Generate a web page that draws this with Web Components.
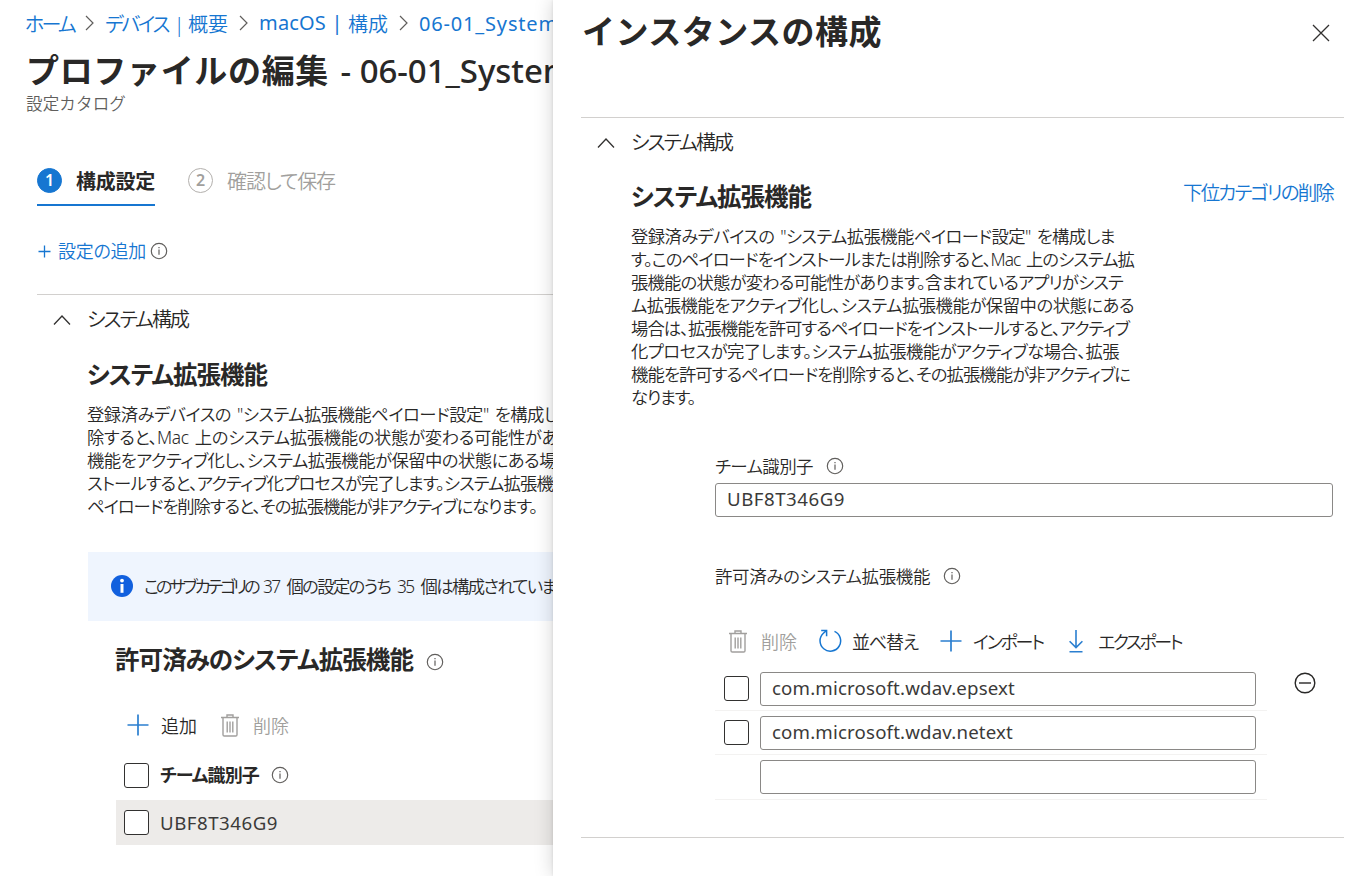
<!DOCTYPE html>
<html lang="ja">
<head>
<meta charset="utf-8">
<title>プロファイルの編集</title>
<style>
  body {
    margin: 0;
    background: #fff;
    color: #292827;
    font-family: "Noto Sans", "Noto Sans CJK JP", sans-serif;
    font-size: 17.33px;
    font-weight: 350;
    font-feature-settings: "palt";
  }
</style>
</head>
<body>
<portal-shell></portal-shell>

<script>
const define = (name, html, setup) => {
  const template = document.createElement('template');
  template.innerHTML = html;
  customElements.define(name, class extends HTMLElement {
    constructor() {
      super();
      this.attachShadow({ mode: 'open' });
      this.shadowRoot.appendChild(template.content.cloneNode(true));
    }
    connectedCallback() {
      if (setup) setup(this, this.shadowRoot);
    }
  });
};

const ICONS = {
  plus: [22, 22, '<path d="M11 .5v21M.5 11h21" stroke="#2b7fd0" stroke-width="1.7"/>'],
  smallplus: [13, 13, '<path d="M6.5 .5v12M.5 6.5h12" stroke="#1676d1" stroke-width="1.3"/>'],
  trash: [18, 23, '<path d="M0 3.5h18M6 3.5V1h6v2.5M2 3.5v17.2q0 1.3 1.3 1.3h11.4q1.3 0 1.3-1.3V3.5M6.2 7.5v11M9 7.5v11M11.8 7.5v11" stroke="#a19f9d" stroke-width="1.4"/>'],
  refresh: [24, 24, '<path d="M16.5 2.4A10.3 10.3 0 1 1 5.4 4.2L8.3 1.6" stroke="#1676d1" stroke-width="1.5"/><path d="M3.2 1.6h5.4v5.6" stroke="#1676d1" stroke-width="1.5"/>'],
  download: [14, 23, '<path d="M7 0v17.5M.6 11.2L7 17.6l6.4-6.4M.5 21.7h13" stroke="#2b7fd0" stroke-width="1.6"/>'],
  close: [18, 18, '<path d="M1 1l16 16M17 1L1 17" stroke="#323130" stroke-width="1.3"/>'],
  up: [18, 12, '<path d="M1 10.5l8-8.5 8 8.5" stroke="#323130" stroke-width="1.3"/>'],
  right: [9, 16, '<path d="M1 1l7 7-7 7" stroke="#605e5c" stroke-width="1.2"/>'],
  info: [18, 18, '<circle cx="9" cy="9" r="7.7" stroke="#605e5c" stroke-width="1.15"/><path d="M9 7.6v5.2M9 5v1.3" stroke="#605e5c" stroke-width="1.2"/>'],
  infofill: [22, 22, '<circle cx="11" cy="11" r="11" fill="#1160de"/><path d="M11 9v8.8" stroke="#fff" stroke-width="3"/><circle cx="11" cy="5.6" r="1.9" fill="#fff"/>'],
  minus: [22, 22, '<circle cx="11" cy="11" r="9.8" stroke="#292827" stroke-width="1.4"/><path d="M5 11h12" stroke="#292827" stroke-width="1.4"/>']
};

define('ui-icon', `
  <style>
    :host { display: inline-flex; flex: none; }
    svg { display: block; }
  </style>
`, (el, root) => {
  const [w, h, body] = ICONS[el.getAttribute('name')];
  root.innerHTML += `<svg width="${w}" height="${h}" viewBox="0 0 ${w} ${h}" fill="none">${body}</svg>`;
});

define('ui-checkbox', `
  <style>
    :host {
      display: block;
      flex: none;
      box-sizing: border-box;
      width: 25px;
      height: 25px;
      border: 1.5px solid #323130;
      border-radius: 3px;
      background: #fff;
    }
  </style>
`);

define('ui-field', `
  <style>
    :host {
      display: flex;
      align-items: center;
      box-sizing: border-box;
      height: 34px;
      padding: 0 11px 3px;
      border: 1px solid #8a8886;
      border-radius: 3px;
      background: #fff;
      color: #3b3a39;
      font-size: 18.67px;
      font-weight: 400;
    }
  </style>
  <slot></slot>
`);

define('ui-command', `
  <style>
    :host { display: flex; align-items: center; height: 30px; gap: 12px; font-size: 18px; }
    :host([disabled]) { color: #a19f9d; }
    span { display: flex; }
  </style>
  <slot name="icon"></slot>
  <span><slot></slot></span>
`);

define('bread-crumb', `
  <style>
    :host { display: flex; align-items: center; height: 28px; gap: 11px; color: #1676d1; font-size: 20px; }
  </style>
  <slot></slot>
`);

define('wizard-step', `
  <style>
    :host {
      display: flex;
      align-items: center;
      box-sizing: border-box;
      height: 49px;
      color: #a19f9d;
      border-bottom: 2px solid transparent;
      font-size: 20px;
    }
    :host([active]) { color: #292827; font-weight: 600; border-color: #1676d1; }
    i {
      box-sizing: border-box;
      width: 25px;
      height: 25px;
      margin-right: 14px;
      border: 1.4px solid #b3b0ad;
      border-radius: 50%;
      font: 600 16px/22px "Noto Sans", sans-serif;
      text-align: center;
    }
    :host([active]) i { background: #1676d1; border-color: #1676d1; color: #fff; }
  </style>
  <i></i><slot></slot>
`, (el, root) => {
  root.querySelector('i').textContent = el.getAttribute('number');
});

define('section-head', `
  <style>
    :host { display: flex; align-items: center; height: 47px; border-top: 1px solid #d2d0ce; font-size: 20px; }
    ui-icon { margin: 3px 16px 0; }
  </style>
  <ui-icon name="up"></ui-icon><slot></slot>
`);

define('text-lines', `
  <style>
    :host { display: flex; flex-direction: column; align-items: flex-start; line-height: 23px; word-spacing: 2px; }
  </style>
  <slot></slot>
`);

define('message-bar', `
  <style>
    :host {
      display: flex;
      align-items: center;
      box-sizing: border-box;
      height: 69px;
      padding: 0 0 2px 23px;
      background: #eff5fe;
      word-spacing: 4px;
    }
    ui-icon { margin-right: 11px; }
  </style>
  <ui-icon name="infofill"></ui-icon><slot></slot>
`);

define('edit-page', `
  <style>
    :host { display: flow-root; width: 553px; height: 876px; overflow: hidden; white-space: nowrap; }
    bread-crumb { margin: 9px 0 0 25px; }
    .latin { font-weight: 400; }
    h1 { display: flex; margin: 11px 0 0 26px; font-size: 33px; line-height: 46px; font-weight: 600; font-feature-settings: normal; }
    h1 .latin { font-weight: 500; }
    .sub { margin-left: 26px; font-size: 16.5px; line-height: 20px; color: #605e5c; font-feature-settings: normal; }
    .steps { display: flex; gap: 33px; margin: 43px 0 0 37px; }
    .add { display: flex; align-items: center; height: 30px; margin: 30px 0 0 38px; font-size: 18px; color: #1676d1; }
    .add ui-icon { margin-right: 4px; }
    .add fit-text { margin: -2px 4px 0 3px; }
    section-head { margin: 28px 0 0 37px; }
    h2 { display: block; margin: 17px 0 0 87px; font-size: 24.5px; line-height: 32px; font-weight: 600; }
    text-lines { margin: 12px 0 0 87px; }
    message-bar { margin: 34px 0 0 88px; }
    h3 { display: flex; align-items: center; height: 40px; margin: 17px 0 0 115px; gap: 13px; font-size: 24.5px; font-weight: 600; }
    h3 ui-icon { margin-top: 8px; }
    .tools { display: flex; gap: 24px; margin: 32px 0 0 127px; height: 30px; }
    .row { display: flex; align-items: center; box-sizing: border-box; height: 45px; margin-left: 116px; padding-left: 8px; gap: 12px; }
    .row fit-text { margin-left: -1px; }
    .head { height: 50px; margin-top: 10px; font-weight: 600; font-size: 18px; }
    .head fit-text { margin-top: -2px; }
    .picked { background: #edebe9; color: #3b3a39; font-size: 18.67px; font-weight: 400; }
  </style>
  <bread-crumb>
    <fit-text width="49">ホーム</fit-text><ui-icon name="right"></ui-icon>
    <span style="word-spacing: 3px"><fit-text width="83">デバイス | </fit-text><fit-text width="40">概要</fit-text></span><ui-icon name="right"></ui-icon>
    <span><fit-text class="latin" width="89">macOS | </fit-text><fit-text width="40">構成</fit-text></span><ui-icon name="right"></ui-icon>
    <fit-text class="latin" width="139">06-01_System</fit-text>
  </bread-crumb>
  <h1><fit-text width="303">プロファイルの編集</fit-text><fit-text class="latin" width="242" style="margin-left: 3px"> - 06-01_System</fit-text></h1>
  <div class="sub"><fit-text width="100">設定カタログ</fit-text></div>
  <div class="steps">
    <wizard-step number="1" active><fit-text width="79">構成設定</fit-text></wizard-step>
    <wizard-step number="2"><fit-text width="108">確認して保存</fit-text></wizard-step>
  </div>
  <div class="add"><ui-icon name="smallplus"></ui-icon><fit-text width="88">設定の追加</fit-text><ui-icon name="info"></ui-icon></div>
  <section-head><fit-text width="101">システム構成</fit-text></section-head>
  <h2><fit-text width="180">システム拡張機能</fit-text></h2>
  <text-lines>
    <fit-text width="471">登録済みデバイスの "システム拡張機能ペイロード設定" を構成し</fit-text>
    <fit-text width="471">除すると、Mac 上のシステム拡張機能の状態が変わる可能性があ</fit-text>
    <fit-text width="469">機能をアクティブ化し、システム拡張機能が保留中の状態にある場</fit-text>
    <fit-text width="466">ストールすると、アクティブ化プロセスが完了します。システム拡張機</fit-text>
    <fit-text width="450">ペイロードを削除すると、その拡張機能が非アクティブになります。</fit-text>
  </text-lines>
  <message-bar><fit-text width="119">このサブカテゴリの </fit-text><fit-text width="134">37 個の設定のうち </fit-text><fit-text width="159">35 個は構成されていま</fit-text></message-bar>
  <h3><fit-text width="298">許可済みのシステム拡張機能</fit-text><ui-icon name="info"></ui-icon></h3>
  <div class="tools">
    <ui-command><ui-icon slot="icon" name="plus"></ui-icon><fit-text width="36">追加</fit-text></ui-command>
    <ui-command disabled style="gap: 14px"><ui-icon slot="icon" name="trash"></ui-icon><fit-text width="36">削除</fit-text></ui-command>
  </div>
  <div class="row head"><ui-checkbox></ui-checkbox><fit-text width="99">チーム識別子</fit-text><ui-icon name="info"></ui-icon></div>
  <div class="row picked"><ui-checkbox></ui-checkbox><fit-text width="118">UBF8T346G9</fit-text></div>
`);

define('instance-panel', `
  <style>
    :host {
      display: block;
      position: relative;
      box-sizing: border-box;
      height: 876px;
      padding: 0 16px 0 28px;
      background: #fff;
      box-shadow: 0 0 18px rgba(0, 0, 0, .18), 0 0 3px rgba(0, 0, 0, .1);
      white-space: nowrap;
    }
    header { display: flex; justify-content: space-between; height: 117px; padding-right: 14px; box-sizing: border-box; }
    header ui-icon { margin-top: 24px; }
    h1 { margin: 9px 0 0 1px; font-size: 33px; line-height: 46px; font-weight: 600; font-feature-settings: normal; }
    main { padding: 0 11px 0 50px; }
    .title { display: flex; justify-content: space-between; height: 32px; margin-top: 16px; }
    h2 { margin: 0; font-size: 24.5px; line-height: 32px; font-weight: 600; }
    a { color: #1676d1; font-size: 19.5px; line-height: 23px; }
    text-lines { margin-top: 12px; }
    .form { margin: 42px 0 0 84px; }
    .label { display: flex; align-items: center; height: 30px; gap: 13px; font-size: 17.5px; }
    .label fit-text { margin-top: -2px; }
    .second { margin-top: 44px; }
    .tools { display: flex; margin: 35px 0 0 14px; height: 30px; }
    .list { display: flex; align-items: flex-start; margin: 11px 0 0 134px; }
    .rows { width: 552px; }
    .row { display: flex; align-items: center; box-sizing: border-box; height: 44px; padding: 0 11px 0 9px; gap: 11px; border-bottom: 1px solid #f3f2f1; }
    .row ui-field { flex: 1; }
    .row.blank { padding-left: 45px; height: 45px; }
    .list > ui-icon { margin: 5px 0 0 27px; }
    footer { margin-top: 37px; border-top: 1px solid #d2d0ce; }
  </style>
  <header>
    <h1><fit-text width="300">インスタンスの構成</fit-text></h1>
    <ui-icon name="close"></ui-icon>
  </header>
  <section-head><fit-text width="101">システム構成</fit-text></section-head>
  <main>
    <div class="title">
      <h2><fit-text width="180">システム拡張機能</fit-text></h2>
      <a><fit-text width="150">下位カテゴリの削除</fit-text></a>
    </div>
    <text-lines>
      <fit-text width="484">登録済みデバイスの "システム拡張機能ペイロード設定" を構成しま</fit-text>
      <fit-text width="503">す。このペイロードをインストールまたは削除すると、Mac 上のシステム拡</fit-text>
      <fit-text width="492">張機能の状態が変わる可能性があります。含まれているアプリがシステ</fit-text>
      <fit-text width="503">ム拡張機能をアクティブ化し、システム拡張機能が保留中の状態にある</fit-text>
      <fit-text width="498">場合は、拡張機能を許可するペイロードをインストールすると、アクティブ</fit-text>
      <fit-text width="488">化プロセスが完了します。システム拡張機能がアクティブな場合、拡張</fit-text>
      <fit-text width="499">機能を許可するペイロードを削除すると、その拡張機能が非アクティブに</fit-text>
      <fit-text width="64">なります。</fit-text>
    </text-lines>
    <div class="form">
      <div class="label"><fit-text width="98">チーム識別子</fit-text><ui-icon name="info"></ui-icon></div>
      <ui-field style="margin-top: 2px"><fit-text width="118">UBF8T346G9</fit-text></ui-field>
      <div class="label second"><fit-text width="215">許可済みのシステム拡張機能</fit-text><ui-icon name="info"></ui-icon></div>
      <div class="tools">
        <ui-command disabled style="gap: 14px"><ui-icon slot="icon" name="trash"></ui-icon><fit-text width="36">削除</fit-text></ui-command>
        <ui-command style="gap: 10px; margin-left: 21px"><ui-icon slot="icon" name="refresh"></ui-icon><fit-text width="66">並べ替え</fit-text></ui-command>
        <ui-command style="gap: 11px; margin-left: 22px"><ui-icon slot="icon" name="plus"></ui-icon><fit-text width="70">インポート</fit-text></ui-command>
        <ui-command style="gap: 15px; margin-left: 26px"><ui-icon slot="icon" name="download"></ui-icon><fit-text width="83">エクスポート</fit-text></ui-command>
      </div>
    </div>
  </main>
  <div class="list">
    <div class="rows">
      <div class="row"><ui-checkbox></ui-checkbox><ui-field><fit-text width="243">com.microsoft.wdav.epsext</fit-text></ui-field></div>
      <div class="row"><ui-checkbox></ui-checkbox><ui-field><fit-text width="241">com.microsoft.wdav.netext</fit-text></ui-field></div>
      <div class="row blank"><ui-field></ui-field></div>
    </div>
    <ui-icon name="minus"></ui-icon>
  </div>
  <footer></footer>
`);

define('portal-shell', `
  <style>
    :host { display: grid; grid-template-columns: 553px 1fr; height: 876px; overflow: hidden; }
  </style>
  <edit-page></edit-page>
  <instance-panel></instance-panel>
`);

// Spreads its text evenly so that the line takes exactly the given width.
define('fit-text', '<style>:host { display: inline-block; flex: none; white-space: pre; vertical-align: top; }</style><slot></slot>', el => {
  const natural = el.getBoundingClientRect().width;
  const target = Number(el.getAttribute('width'));
  const count = [...el.textContent].length;
  el.style.letterSpacing = `${(target - natural) / count}px`;
});
</script>
</body>
</html>
